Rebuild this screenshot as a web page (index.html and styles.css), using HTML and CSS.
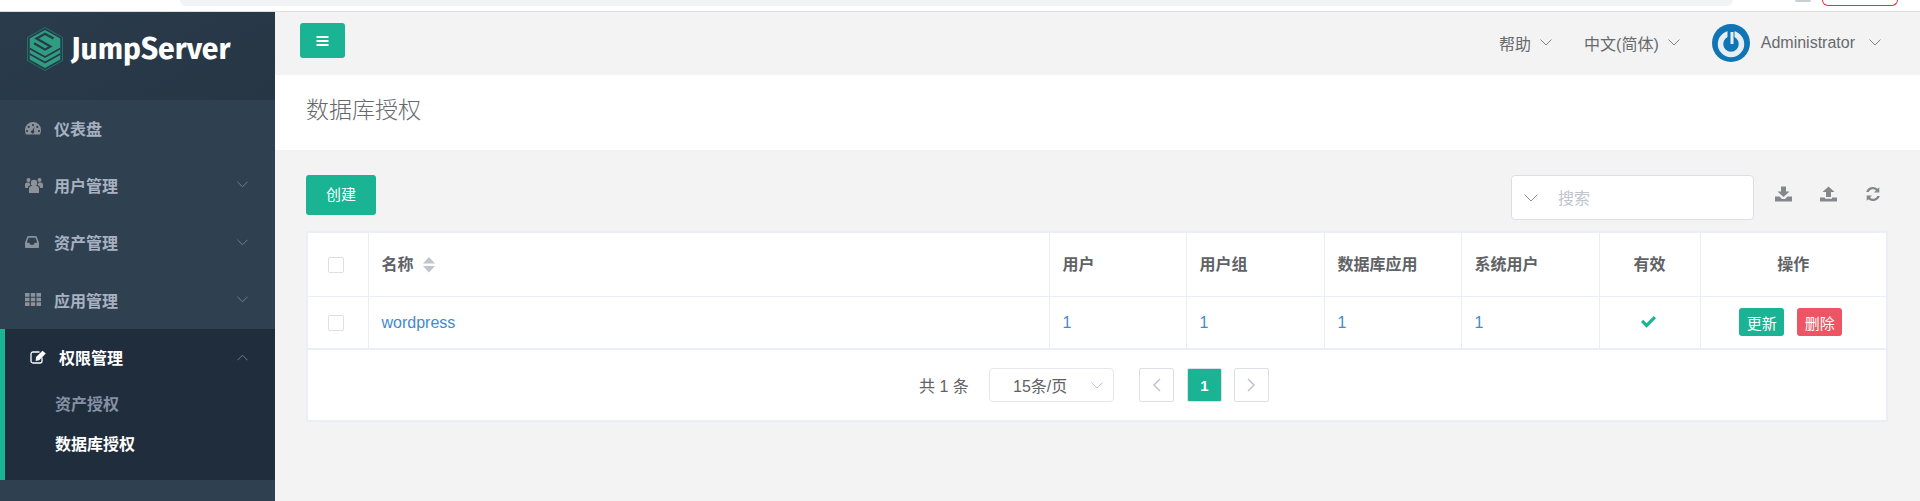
FILE: index.html
```html
<!DOCTYPE html>
<html lang="zh">
<head>
<meta charset="utf-8">
<title>数据库授权</title>
<link rel="stylesheet" href="styles.css">
</head>
<body>
<div class="chrome">
  <div class="address"></div>
  <div class="chrome-dot"></div>
  <div class="chrome-pill"></div>
</div>
<div class="app">
  <aside class="sidebar">
    <div class="logo">
      <svg class="logo-mark" viewBox="0 0 36 44" width="36" height="44">
        <path d="M18 .5 35.500 10.500v23L18 43.500.5 33.500v-23z" fill="none" stroke="#1f8272" stroke-width=".8"/>
        <path d="M18 3 33.300 11.500v21L18 41 2.700 32.500v-21z" fill="#2f9e80"/>
        <path d="M2.700 21.500 18 30l15.300-8.500M2.700 27 18 35.500 33.300 27" fill="none" stroke="#27394a" stroke-width="1.700"/>
        <path d="M26.500 11.500 18 6.800 9.500 11.500l14 8L18 22.600 7 16.300" fill="none" stroke="#27394a" stroke-width="2.200"/>
      </svg>
      <span class="logo-text">JumpServer</span>
    </div>
    <nav>
      <a class="nav-item">
        <svg class="nav-icon" viewBox="0 0 16 14" width="16" height="14"><path fill-rule="evenodd" d="M8 1a8 8 0 0 1 8 8c0 1.800-.4 3.400-1.200 4.500H1.200C.4 12.400 0 10.800 0 9a8 8 0 0 1 8-8zM8 3a1.100 1.100 0 1 0 0 2.200A1.100 1.100 0 0 0 8 3zM3.700 4.800a1.100 1.100 0 1 0 0 2.200 1.100 1.100 0 0 0 0-2.200zM12.300 4.800a1.100 1.100 0 1 0 0 2.200 1.100 1.100 0 0 0 0-2.200zM2 9a1.100 1.100 0 1 0 0 2.200A1.100 1.100 0 0 0 2 9zM14 9a1.100 1.100 0 1 0 0 2.200A1.100 1.100 0 0 0 14 9zM9.600 5.800 7.300 9.200a1.700 1.700 0 1 0 1.500.4z"/></svg>
        <span class="nav-label">仪表盘</span>
      </a>
      <a class="nav-item">
        <svg class="nav-icon" viewBox="0 0 18 16" width="18" height="16"><circle cx="9" cy="6" r="3.200"/><circle cx="3.500" cy="3" r="2"/><circle cx="14.500" cy="3" r="2"/><path d="M4 16v-4.500C4 10 5 9 6.500 9h5C13 9 14 10 14 11.500V16zM0 10V8c0-1.500.8-2.500 2-2.500h2.300C4.800 7 5.100 7.400 5.600 8 4 8.400 3 9.400 2.900 11H1a1 1 0 0 1-1-1zM18 10V8c0-1.500-.8-2.500-2-2.500h-2.300C13.200 7 12.900 7.400 12.400 8c1.600.4 2.600 1.400 2.700 3H17a1 1 0 0 0 1-1z"/></svg>
        <span class="nav-label">用户管理</span>
        <svg class="chev" viewBox="0 0 12 7" width="12" height="7"><path d="M.5.5 6 6 11.500.5"/></svg>
      </a>
      <a class="nav-item">
        <svg class="nav-icon" viewBox="0 0 16 12" width="14" height="12" preserveAspectRatio="none"><path fill-rule="evenodd" d="M3 0h10l3 6.500V11a1 1 0 0 1-1 1H1a1 1 0 0 1-1-1V6.500zM4 1.800 2 6.800h3l1 2h4l1-2h3l-2-5z"/></svg>
        <span class="nav-label">资产管理</span>
        <svg class="chev" viewBox="0 0 12 7" width="12" height="7"><path d="M.5.5 6 6 11.500.5"/></svg>
      </a>
      <a class="nav-item">
        <svg class="nav-icon" viewBox="0 0 16 13" width="16" height="13"><path d="M0 0h4.500v3.700H0zM5.800 0h4.400v3.700H5.800zM11.500 0H16v3.700h-4.500zM0 4.700h4.500v3.600H0zM5.800 4.700h4.400v3.600H5.800zM11.500 4.700H16v3.600h-4.500zM0 9.300h4.500V13H0zM5.800 9.300h4.400V13H5.800zM11.500 9.300H16V13h-4.500z"/></svg>
        <span class="nav-label">应用管理</span>
        <svg class="chev" viewBox="0 0 12 7" width="12" height="7"><path d="M.5.5 6 6 11.500.5"/></svg>
      </a>
      <div class="nav-group">
        <a class="nav-item nav-item-active">
          <svg class="nav-icon" viewBox="0 0 17 14" width="17" height="14"><path d="M12 7.500V11a2 2 0 0 1-2 2H3a2 2 0 0 1-2-2V4a2 2 0 0 1 2-2h6.500" fill="none" stroke="#fff" stroke-width="1.300"/><path d="M6 7 12.500.8l3.300 2.700L9.200 10.200 5.700 11z" fill="#fff"/></svg>
          <span class="nav-label">权限管理</span>
          <svg class="chev" viewBox="0 0 12 7" width="12" height="7"><path d="M.5 6.500 6 1l5.500 5.500"/></svg>
        </a>
        <a class="sub-item">资产授权</a>
        <a class="sub-item sub-item-active">数据库授权</a>
      </div>
    </nav>
  </aside>
  <main class="main">
    <header class="topbar">
      <button class="menu-btn">
        <svg viewBox="0 0 12 10" width="13" height="10"><path d="M0 0h12v2H0zM0 4h12v2H0zM0 8h12v2H0z" fill="#fff"/></svg>
      </button>
      <div class="top-right">
        <span class="top-link">帮助<svg class="top-chev" viewBox="0 0 12 7" width="12" height="7"><path d="M.5.500 6 6 11.500.5"/></svg></span>
        <span class="top-link">中文(简体)<svg class="top-chev" viewBox="0 0 12 7" width="12" height="7"><path d="M.5.500 6 6 11.500.5"/></svg></span>
        <span class="top-user">
          <svg class="avatar" viewBox="0 0 38 38" width="38" height="38"><circle cx="19" cy="19" r="19" fill="#0f75b5"/><circle cx="19" cy="20" r="10.500" fill="none" stroke="#e6eef4" stroke-width="5.500"/><path d="M19 5v11" stroke="#0f75b5" stroke-width="7"/><path d="M20 8v12" stroke="#e6eef4" stroke-width="3"/></svg>
          <span>Administrator</span>
          <svg class="top-chev user-chev" viewBox="0 0 12 7" width="12" height="7"><path d="M.5.500 6 6 11.500.5"/></svg>
        </span>
      </div>
    </header>
    <section class="page-head"><h2>数据库授权</h2></section>
    <section class="content">
      <div class="toolbar">
        <button class="create-btn">创建</button>
        <div class="tools">
          <div class="search">
            <svg class="search-chev" viewBox="0 0 14 8" width="14" height="8"><path d="M.5.500 7 7 13.500.5"/></svg>
            <span>搜索</span>
          </div>
          <svg class="tool" viewBox="0 0 17 15" width="17" height="16"><path d="M6 0h5v5h3.500L8.500 10.500 2.500 5H6zM0 10h4.500l2.500 2.500h3L12.500 10H17v5H0z"/></svg>
          <svg class="tool" viewBox="0 0 17 15" width="17" height="16"><path d="M8.500 0l6 5.500H11v5H6v-5H2.500zM0 11h5v1.300h7V11h5v4H0z"/></svg>
          <svg class="tool" viewBox="0 0 16 15" width="16" height="16"><path d="M8 0.500a7 7 0 0 1 4.700 1.800L14.300.7V6H9l2-2a4.500 4.500 0 0 0-7.300 1.600H1.200A7 7 0 0 1 8 .5zM1.700 9H7L5 11a4.500 4.500 0 0 0 7.300-1.600h2.500A7 7 0 0 1 3.300 12.700L1.700 14.300z"/></svg>
        </div>
      </div>
      <div class="card">
        <table class="grid">
          <colgroup>
            <col class="c-check"><col class="c-name"><col class="c-a"><col class="c-b"><col class="c-c"><col class="c-d"><col class="c-e"><col class="c-f">
          </colgroup>
          <thead>
            <tr>
              <th class="check-cell"><span class="check"></span></th>
              <th>名称<svg class="sort" viewBox="0 0 12 16" width="12" height="16"><path d="M6 0l6 6.500H0zM0 9h12l-6 6.500z"/></svg></th>
              <th>用户</th>
              <th>用户组</th>
              <th>数据库应用</th>
              <th>系统用户</th>
              <th class="center">有效</th>
              <th class="center">操作</th>
            </tr>
          </thead>
          <tbody>
            <tr>
              <td class="check-cell"><span class="check"></span></td>
              <td><a class="link">wordpress</a></td>
              <td><a class="link">1</a></td>
              <td><a class="link">1</a></td>
              <td><a class="link">1</a></td>
              <td><a class="link">1</a></td>
              <td class="center ok-cell"><svg class="ok" viewBox="0 0 14 11" width="15" height="12"><path d="M0 5.500 2 3.500 5.200 6.700 12 0l2 2-8.800 8.800z"/></svg></td>
              <td class="center actions"><button class="mini mini-green">更新</button><button class="mini mini-red">删除</button></td>
            </tr>
          </tbody>
        </table>
        <div class="pager">
          <span class="total">共 1 条</span>
          <span class="size">15条/页<svg viewBox="0 0 12 7" width="12" height="7"><path d="M.5.500 6 6 11.500.5"/></svg></span>
          <span class="pg pg-prev"><svg viewBox="0 0 9 14" width="9" height="14"><path d="M8 1 2 7l6 6"/></svg></span>
          <span class="pg pg-on">1</span>
          <span class="pg"><svg viewBox="0 0 9 14" width="9" height="14"><path d="M1 1l6 6-6 6"/></svg></span>
        </div>
      </div>
    </section>
  </main>
</div>
</body>
</html>
```

FILE: styles.css
```css
* { box-sizing: border-box; }
body {
  margin: 0;
  height: 501px;
  overflow: hidden;
  background: #f3f3f4;
  color: #676a6c;
  font-family: "Liberation Sans", "Noto Sans CJK SC", sans-serif;
  font-size: 16px;
  display: flex;
  flex-direction: column;
}
.chrome {
  height: 12px;
  flex: none;
  background: #fff;
  border-bottom: 1px solid #dedede;
  display: flex;
  align-items: flex-start;
  padding-left: 180px;
}
.address { width: 1553px; height: 6px; background: #f1f3f4; border-radius: 0 0 14px 14px; }
.chrome-dot { width: 16px; height: 2px; margin-left: 62px; background: #c9ced3; border-radius: 0 0 8px 8px; }
.chrome-pill { width: 76px; height: 6px; margin-left: 11px; border: 1px solid #d03b3b; border-top: 0; border-radius: 0 0 12px 12px; }
.app { flex: 1; display: flex; min-height: 0; }

.sidebar { width: 275px; flex: none; background: #2f4050; }
.logo {
  height: 88px;
  display: flex;
  align-items: flex-start;
  padding: 15px 0 0 27px;
  background: linear-gradient(150deg, #2a3b4b, #263645);
}
.logo-mark { flex: none; }
.logo-text {
  margin-left: 8px;
  color: #fff;
  font-family: "Fira Sans", "Noto Sans", sans-serif;
  font-weight: 700;
  font-size: 30px;
  line-height: 44px;
}
.nav-item {
  height: 57.300px;
  display: grid;
  grid-template-columns: 29px 1fr auto;
  align-items: center;
  padding: 0 0 2px 25px;
  color: #a7b1c2;
  font-weight: 700;
}
.nav-icon { fill: #8d9299; }
.chev { grid-column: 3; width: 11px; margin-right: 27px; fill: none; stroke: #78838f; stroke-width: 1; }
.nav-group { background: #1f2d3d; border-left: 5px solid #1ab394; height: 151px; }
.nav-item-active { color: #fff; height: 56px; padding-bottom: 0; }
.nav-item-active .nav-icon { fill: #fff; }
.sub-item { display: block; height: 40px; line-height: 40px; padding-left: 50px; color: #8590a3; font-weight: 700; }
.sub-item-active { color: #fff; }

.main { flex: 1; min-width: 0; display: flex; flex-direction: column; }
.topbar { height: 63px; flex: none; display: flex; align-items: flex-start; padding: 11px 39px 0 25px; }
.menu-btn { width: 45px; height: 35px; background: #1ab394; border: 0; border-radius: 3px; padding: 0; display: flex; align-items: center; justify-content: center; }
.top-right { margin-left: auto; display: flex; align-items: center; height: 41px; margin-top: -1px; font-size: 16px; color: #676a6c; }
.top-link { display: flex; align-items: center; margin-right: 32px; }
.top-chev { fill: none; stroke: #7f8286; stroke-width: 1; margin-left: 9px; }
.top-user { display: flex; align-items: center; }
.avatar { margin-right: 11px; }
.user-chev { margin-left: 14px; }
.page-head { height: 75px; flex: none; background: #fff; padding: 0 31px; display: flex; align-items: center; }
.page-head h2 { margin: 0 0 9px; font-size: 23px; font-weight: 300; color: #676a6c; }

.content { padding: 25px 31px 0; }
.toolbar { display: flex; align-items: flex-start; justify-content: space-between; height: 58px; }
.create-btn { width: 70px; height: 40px; border: 0; border-radius: 3px; background: #1ab394; color: #fff; font: inherit; font-size: 15px; padding: 0 0 4px; }
.tools { display: flex; align-items: flex-start; padding-right: 8px; }
.search { width: 243px; height: 45px; background: #fff; border: 1px solid #dcdfe6; border-radius: 4px; display: flex; align-items: center; padding-left: 12px; color: #c0c4cc; }
.search-chev { fill: none; stroke: #8f9399; stroke-width: 1; margin-right: 20px; }
.search span { margin-bottom: 1px; }
.tool { fill: #84878b; margin: 11px 0 0 28px; }
.tool:first-of-type { margin-left: 21px; }

.card { width: 1582px; background: #fff; border: 2px solid #ebeef5; height: 191px; margin-top: -2px; }
.grid { width: 100%; border-collapse: collapse; table-layout: fixed; }
.c-check { width: 60px; }
.c-name { width: 681px; }
.c-a { width: 137px; }
.c-b { width: 138px; }
.c-c { width: 137px; }
.c-d { width: 138px; }
.c-e { width: 101px; }
.grid th, .grid td { padding: 0 13px; border-right: 1px solid #ebeef5; text-align: left; }
.grid th:last-child, .grid td:last-child { border-right: 0; }
.grid th { height: 63px; font-size: 16px; font-weight: 700; color: #606266; border-bottom: 1px solid #ebeef5; padding-bottom: 3px; }
.grid td { height: 53px; border-bottom: 2px solid #ebeef5; padding-top: 2px; }
.grid .center { text-align: center; }
.grid .check-cell { padding: 2px 0 0 20px; }
.check { display: block; width: 16px; height: 16px; border: 1px solid #dcdfe6; border-radius: 2px; background: #fff; }
.sort { fill: #c0c4cc; margin-left: 9px; vertical-align: -3px; }
.link { color: #428bca; }
.grid .ok-cell { padding-right: 16px; padding-top: 0; }
.ok { fill: #1ab394; vertical-align: -1px; }
.grid .actions { white-space: nowrap; padding-right: 18px; padding-top: 0; }
.mini { width: 45px; height: 28px; border: 0; border-radius: 3px; color: #fff; font: inherit; font-size: 15px; padding: 0; vertical-align: middle; }
.mini-green { background: #1ab394; }
.mini-red { background: #ed5565; margin-left: 13px; }
.pager { height: 72px; display: flex; align-items: center; padding: 0 0 2px 611px; font-size: 16px; color: #606266; }
.total { width: 70px; white-space: pre; }
.size { width: 125px; height: 34px; border: 1px solid #e4e7ed; border-radius: 4px; display: flex; align-items: center; padding-left: 23px; }
.size svg { fill: none; stroke: #c0c4cc; margin-left: auto; margin-right: 10px; }
.pg { width: 35px; height: 34px; border: 1px solid #dcdfe6; border-radius: 2px; display: flex; align-items: center; justify-content: center; margin-left: 12px; }
.pg svg { fill: none; stroke: #c0c4cc; stroke-width: 1.500; }
.pg-prev { margin-left: 25px; }
.pg-on { background: #1ab394; border-color: #dcdfe6; color: #fff; font-size: 15px; font-weight: 700; margin-left: 13px; }
```
